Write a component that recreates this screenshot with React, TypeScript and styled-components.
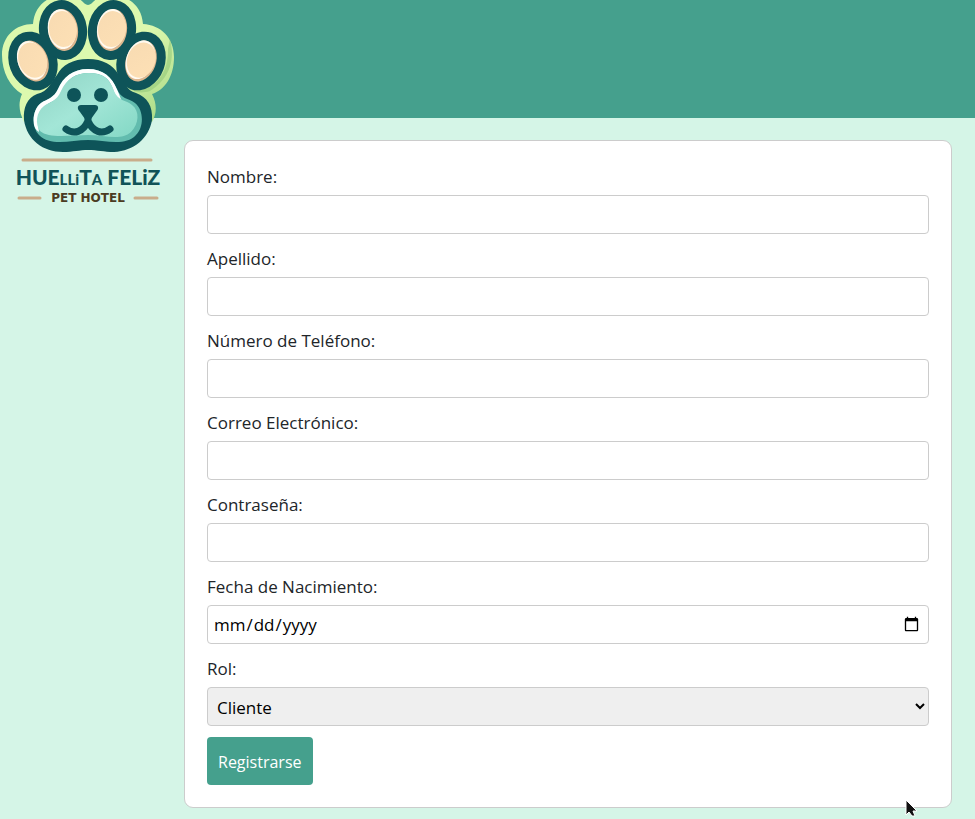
import React from "react";
import styled, { createGlobalStyle } from "styled-components";

const GlobalStyle = createGlobalStyle`
  *, *::before, *::after { box-sizing: border-box; }
  body {
    margin: 0;
    background: #d5f5e7;
    color: #212529;
    font-family: "Open Sans", "Noto Sans", sans-serif;
    font-size: 17px;
    line-height: 26px;
  }
`;

const Page = styled.div`
  position: relative;
  min-height: 100vh;
`;

const Header = styled.header`
  height: 118px;
  background: #45a08d;
`;

const HomeLink = styled.a`
  position: absolute;
  top: 0;
  left: 0;
  display: block;
`;

const LogoDrawing = styled.svg`
  display: block;
  width: 176px;
  height: 208px;
`;

const WordMark = styled.text`
  font-family: Lato, "Liberation Sans", sans-serif;
  font-weight: 900;
  font-size: 21px;
  fill: #105358;
`;

const SmallLetters = styled.tspan`
  font-size: 15px;
`;

const TagLine = styled.text`
  font-family: "DejaVu Sans", sans-serif;
  font-weight: 700;
  font-size: 12px;
  fill: #4b3b22;
`;

const Main = styled.main`
  padding: 22px 23px 11px 184px;
`;

const Form = styled.form`
  padding: 22px;
  background: #fff;
  border: 1px solid #ccc;
  border-radius: 9px;
`;

const Field = styled.div`
  display: flex;
  flex-direction: column;
  gap: 5px;
  margin-bottom: 11px;
`;

const Label = styled.label`
  align-self: flex-start;
  padding-top: 1px;
`;

const Input = styled.input`
  width: 100%;
  height: 39px;
  padding: 0 6px 0 5px;
  border: 1px solid #ccc;
  border-radius: 4px;
  background: #fff;
  color: #000;
  font: inherit;
`;

const Select = styled.select`
  width: 100%;
  height: 39px;
  padding: 2px 0 0 5px;
  border: 1px solid #ccc;
  border-radius: 4px;
  background-color: #efefef;
  color: #000;
  font: inherit;
`;

const SubmitButton = styled.button`
  display: block;
  height: 48px;
  padding: 2px 11px 0;
  border: 0;
  border-radius: 4px;
  background: #45a08d;
  color: #fff;
  font: inherit;
  font-size: 16px;
  cursor: pointer;
`;

const Pointer = styled.svg`
  position: absolute;
  left: 905px;
  top: 799px;
  width: 14px;
  height: 18px;
  pointer-events: none;
`;

const textFields = [
  { id: "nombre", label: "Nombre:", type: "text" },
  { id: "apellido", label: "Apellido:", type: "text" },
  { id: "telefono", label: "Número de Teléfono:", type: "tel" },
  { id: "correo", label: "Correo Electrónico:", type: "email" },
  { id: "contrasena", label: "Contraseña:", type: "password" },
  { id: "nacimiento", label: "Fecha de Nacimiento:", type: "date" },
];

const toes = [
  { x: 33, y: 61, angle: -20 },
  { x: 63, y: 30, angle: -8 },
  { x: 112, y: 30, angle: 8 },
  { x: 141, y: 61, angle: 20 },
];

function Logo() {
  return (
    <LogoDrawing viewBox="0 0 176 208" role="img" aria-label="Huellita Feliz Pet Hotel">
      <defs>
        <linearGradient id="halo" x1="0" y1="0" x2="1" y2="1">
          <stop offset="0.55" stopColor="#dcf9ae" />
          <stop offset="1" stopColor="#a5d783" />
        </linearGradient>
        <linearGradient id="face" x1="0" y1="0" x2="1" y2="1">
          <stop offset="0" stopColor="#8fd3c4" />
          <stop offset="0.5" stopColor="#a3e6d7" />
          <stop offset="1" stopColor="#83d8c5" />
        </linearGradient>
        <linearGradient id="pad" x1="0" y1="0" x2="1" y2="1">
          <stop offset="0" stopColor="#f8dbb2" />
          <stop offset="1" stopColor="#fde0b5" />
        </linearGradient>
        <clipPath id="faceClip">
          <path d="M88 69C73 69 63 77 58 89C54 98 47 99 41 103C32 110 31 127 39 135C51 147 71 140 88 140C105 140 125 147 136 135C144 127 144 110 135 103C128 98 121 99 117 89C112 77 103 69 88 69Z" />
        </clipPath>
      </defs>
      <path
        fill="url(#halo)"
        d="M24 122C19 112 18 103 22 94C10 87 2 72 2 55C2 36 16 24 33 24C34 9 44-2 58-4H74C81-2 84 5 88 5C92 5 95-2 102-4H120C134 0 142 10 143 24C161 25 174 38 174 57C174 76 165 90 152 94C157 104 157 113 152 122Z"
      />
      <path
        fill="#8fc779"
        opacity="0.55"
        d="M170 39C175 58 171 78 150 91C140 94 134 92 130 88C148 94 169 79 168 49Z"
      />
      {toes.map((t) => (
        <ellipse key={t.x} cx={t.x} cy={t.y} rx="24" ry="30" transform={`rotate(${t.angle} ${t.x} ${t.y})`} fill="#0e5459" />
      ))}
      <path
        fill="#0e5459"
        d="M88 59C73 59 62 65 57 75C50 83 49 91 37 94C27 98 23 108 24 120C27 140 43 152 63 152C73 152 80 150 88 150C97 150 104 152 114 152C134 151 149 138 152 120C153 106 147 97 136 93C126 90 126 84 119 75C113 65 103 59 88 59Z"
      />
      {toes.map((t) => (
        <g key={t.x} transform={`translate(${t.x} ${t.y}) rotate(${t.angle})`}>
          <ellipse rx="15" ry="21" fill="#dcb78f" />
          <ellipse cx="-1" cy="-1" rx="14" ry="20" fill="#fffaf0" />
          <ellipse cx="0" cy="-1" rx="14" ry="18" fill="url(#pad)" />
        </g>
      ))}
      <g clipPath="url(#faceClip)">
        <rect x="28" y="65" width="120" height="80" fill="#62bcae" />
        <path
          fill="#fff"
          d="M88 67C73 67 63 76 57 88C53 97 47 98 40 102C29 109 30 126 39 132C37 120 38 112 45 106C52 100 59 101 62 91C67 79 75 73 89 73C103 73 109 78 113 89C115 96 118 100 122 102L119 94C113 77 103 67 88 67Z"
        />
        <path
          fill="url(#face)"
          d="M89 73C75 73 66 80 61 91C57 101 50 102 44 106C36 112 35 124 40 131C49 139 71 135 88 135C105 135 121 141 131 132C139 124 140 111 132 105C126 100 118 101 114 91C110 79 103 73 89 73Z"
        />
      </g>
      <circle cx="74" cy="95" r="7" fill="#0e5459" />
      <circle cx="101" cy="95" r="7" fill="#0e5459" />
      <path
        d="M81 105H95C99 105 99 109 96 112L91 119H85L80 112C77 109 77 105 81 105Z"
        fill="#0e5459"
      />
      <path
        d="M88 115V121C83 132 74 135 66 129M88 121C93 132 102 135 110 129"
        fill="none"
        stroke="#0e5459"
        strokeWidth="7"
        strokeLinecap="round"
        strokeLinejoin="round"
      />
      <path d="M23 160H151M19 198H40M135 198H157" stroke="#c9ad8b" strokeWidth="3" strokeLinecap="round" />
      <WordMark x="88" y="185" textAnchor="middle">
        HUE<SmallLetters>LLi</SmallLetters>T<SmallLetters>A</SmallLetters> FELiZ
      </WordMark>
      <TagLine x="88" y="202" textAnchor="middle">PET HOTEL</TagLine>
    </LogoDrawing>
  );
}

export default function App() {
  return (
    <Page>
      <GlobalStyle />
      <Header>
        <HomeLink href="#">
          <Logo />
        </HomeLink>
      </Header>
      <Main>
        <Form onSubmit={(event: React.FormEvent) => event.preventDefault()}>
          {textFields.map((field) => (
            <Field key={field.id}>
              <Label htmlFor={field.id}>{field.label}</Label>
              <Input id={field.id} name={field.id} type={field.type} />
            </Field>
          ))}
          <Field>
            <Label htmlFor="rol">Rol:</Label>
            <Select id="rol" name="rol" defaultValue="cliente">
              <option value="cliente">Cliente</option>
            </Select>
          </Field>
          <SubmitButton type="submit">Registrarse</SubmitButton>
        </Form>
      </Main>
      <Pointer viewBox="0 0 14 18" aria-hidden="true">
        <path d="M1 1V16L4 13L7 17H10L8 12H12Z" fill="#111" stroke="#fff" strokeWidth="1" />
      </Pointer>
    </Page>
  );
}
